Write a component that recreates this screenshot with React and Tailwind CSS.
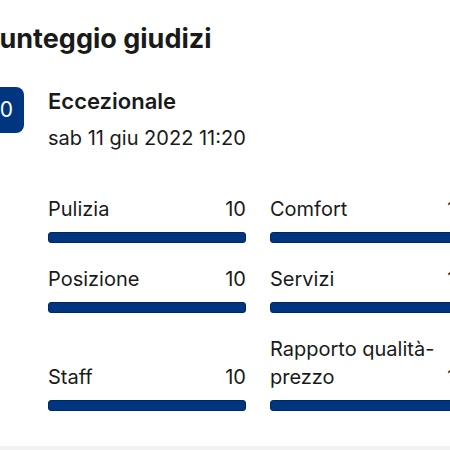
import React from "react";

const scores = [
  { label: "Pulizia", value: 10 },
  { label: "Comfort", value: 10 },
  { label: "Posizione", value: 10 },
  { label: "Servizi", value: 10 },
  { label: "Staff", value: 10 },
  { label: "Rapporto qualità-prezzo", value: 10 },
];

const ScoreRow = ({ label, value }) => (
  <div className="flex flex-col justify-end">
    <div className="flex items-end justify-between gap-3">
      <span className="leading-[28px]">{label}</span>
      <span className="leading-[28px]">{value}</span>
    </div>
    <div className="mt-[9px] h-[11px] w-full rounded-[3px] border border-[#00285f] bg-[#003580]" />
  </div>
);

const App = () => {
  return (
    <div
      className="min-h-[450px] bg-[#f2f2f2] text-[#1a1a1a]"
      style={{ fontFamily: "Inter, 'Noto Sans', sans-serif" }}
    >
      <div className="w-[500px] -ml-[20px] bg-white pb-[35px] pt-[22px]">
        {/* Titolo */}
        <h2 className="ml-[2px] text-[27px] font-bold leading-[33px]">
          Punteggio giudizi
        </h2>

        {/* Giudizio complessivo */}
        <div className="mt-[32px] flex gap-[24px]">
          <div className="flex h-[46px] w-[44px] items-center justify-center rounded-[8px] bg-[#003580] text-[21px] text-white">
            10
          </div>
          <div>
            <p className="text-[22px] font-semibold leading-[28px]">
              Eccezionale
            </p>
            <p className="mt-[10px] text-[20px] leading-[26px]">
              sab 11 giu 2022 11:20
            </p>
          </div>
        </div>

        {/* Punteggi per categoria */}
        <div className="mt-[44px] ml-[68px] grid w-[420px] grid-cols-2 gap-x-[24px] gap-y-[22px] text-[20px]">
          {scores.map((s) => (
            <ScoreRow key={s.label} label={s.label} value={s.value} />
          ))}
        </div>
      </div>
    </div>
  );
};

export default App;
